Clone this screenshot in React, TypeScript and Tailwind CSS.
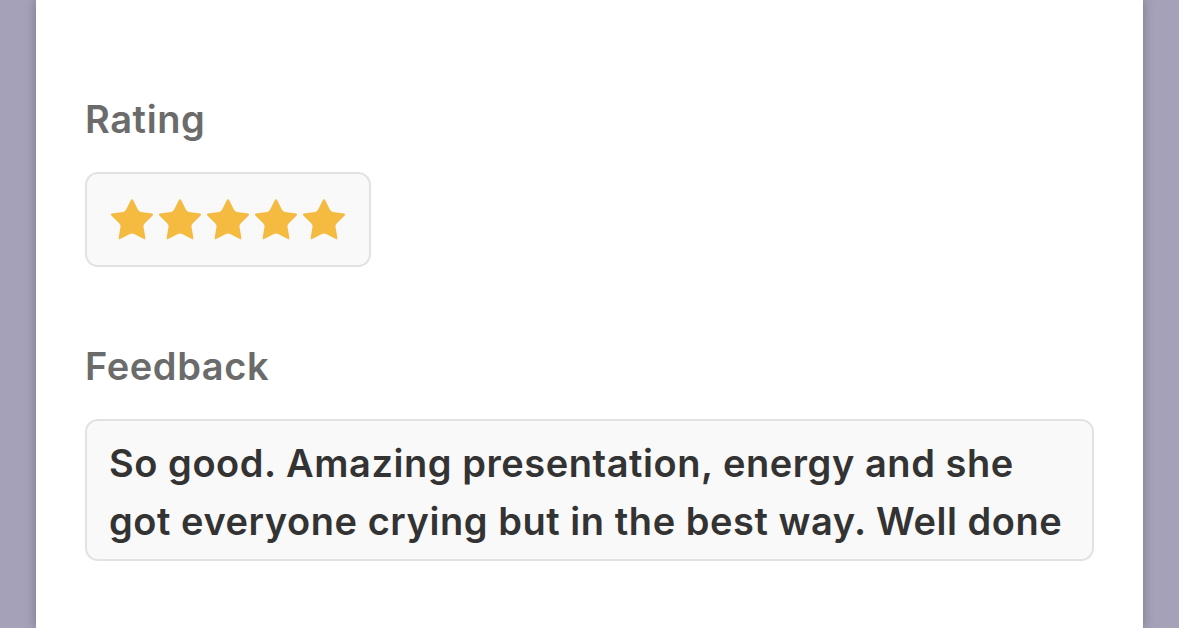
import React from 'react';

const StarIcon: React.FC = () => (
  <svg width="42" height="41" viewBox="2 2 20 19.4" className="shrink-0">
    <path
      d="M11.525 2.295a.53.53 0 0 1 .95 0l2.31 4.679a2.123 2.123 0 0 0 1.595 1.16l5.166.756a.53.53 0 0 1 .294.904l-3.736 3.638a2.123 2.123 0 0 0-.611 1.878l.882 5.14a.53.53 0 0 1-.771.56l-4.618-2.428a2.122 2.122 0 0 0-1.973 0L6.396 21.01a.53.53 0 0 1-.77-.56l.881-5.139a2.122 2.122 0 0 0-.611-1.879L2.16 9.795a.53.53 0 0 1 .294-.906l5.165-.755a2.122 2.122 0 0 0 1.597-1.16z"
      fill="#f5bb41"
    />
  </svg>
);

export default function App() {
  const rating = 5;

  return (
    <div className="h-[628px] w-full overflow-hidden bg-[#a5a1b8] flex" style={{ fontFamily: 'Inter, "Noto Sans", sans-serif' }}>
      <div className="ml-[36px] w-[1107px] h-full bg-white shadow-[0_0_10px_rgba(40,30,70,0.35)] pl-[49px] pt-[95px]">
        {/* Rating */}
        <label className="block text-[38px] leading-[48px] font-semibold tracking-[0.6px] text-[#6b6b6b]">Rating</label>
        <div className="mt-[29px] inline-flex items-center gap-[6px] h-[95px] px-[24px] bg-[#f9f9f9] border-2 border-[#e2e2e2] rounded-[13px]">
          {Array.from({ length: rating }).map((_, i) => (
            <StarIcon key={i} />
          ))}
        </div>

        {/* Feedback */}
        <label className="block mt-[75px] text-[38px] leading-[48px] font-semibold tracking-[0.6px] text-[#6b6b6b]">Feedback</label>
        <div className="mt-[29px] w-[1009px] h-[142px] bg-[#f9f9f9] border-2 border-[#e2e2e2] rounded-[13px] pl-[22px] pt-[13px] text-[38px] leading-[58px] font-semibold tracking-[0.55px] text-[#333333]">
          So good. Amazing presentation, energy and she
          <br />
          got everyone crying but in the best way. Well done
        </div>
      </div>
    </div>
  );
}
